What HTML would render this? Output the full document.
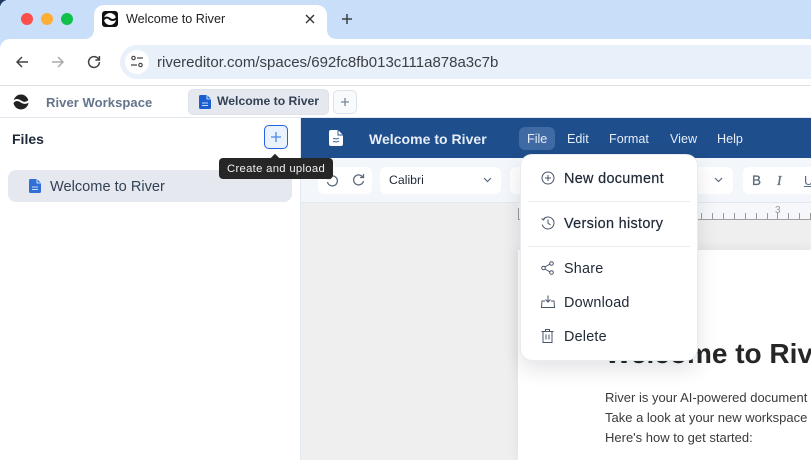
<!DOCTYPE html>
<html><head><meta charset="utf-8"><style>
*{box-sizing:border-box}
html,body{margin:0;padding:0}
body{width:811px;height:460px;overflow:hidden;position:relative;background:#fff;font-family:"Liberation Sans",sans-serif;color:#1f2937}
.a{position:absolute}
.t{position:absolute;white-space:nowrap;line-height:1}
svg{position:absolute;overflow:visible}
</style></head><body>
<div class="a" style="left:0;top:0;width:6px;height:6px;background:#1f3a5f"></div>
<div class="a" style="left:0;top:0;width:811px;height:52px;background:#c9def9;border-radius:8px 0 0 0"></div>
<div class="a" style="left:0;top:39px;width:811px;height:47px;background:#fff;border-radius:10px 0 0 0"></div>
<div class="a" style="left:94px;top:5px;width:233px;height:36px;background:#fff;border-radius:10px 10px 0 0"></div>
<svg style="left:84px;top:29px" width="10" height="10"><path d="M10 0C10 6 7 10 0 10H10z" fill="#fff"/></svg>
<svg style="left:327px;top:29px" width="10" height="10"><path d="M0 0C0 6 3 10 10 10H0z" fill="#fff"/></svg>
<div class="a" style="left:21px;top:13px;width:12px;height:12px;border-radius:50%;background:#fb4f4c"></div>
<div class="a" style="left:41px;top:13px;width:12px;height:12px;border-radius:50%;background:#fdae33"></div>
<div class="a" style="left:61px;top:13px;width:12px;height:12px;border-radius:50%;background:#0fc14b"></div>
<div class="a" style="left:102px;top:11px;width:16px;height:16px;border-radius:3px;background:#111"></div>
<svg style="left:102px;top:11px" width="16" height="16" viewBox="0 0 16 16"><circle cx="8" cy="8" r="6" fill="#fff"/><path d="M1.500 8.500C4 5.500 6.500 6.500 8 8s4.500 1.500 6.500-1" fill="none" stroke="#111" stroke-width="2"/></svg>
<div class="t" style="left:126px;top:12.500px;font-size:12.600px;color:#202124">Welcome to River</div>
<svg style="left:305px;top:14px" width="10" height="10"><path d="M1 1l8 8M9 1L1 9" stroke="#333" stroke-width="1.400"/></svg>
<svg style="left:341px;top:13px" width="12" height="12"><path d="M6 1v10M1 6h10" stroke="#3c4043" stroke-width="1.500"/></svg>
<svg style="left:15px;top:55px" width="14" height="14"><path d="M13 7H2M7 2L2 7l5 5" fill="none" stroke="#444" stroke-width="1.500"/></svg>
<svg style="left:51px;top:55px" width="14" height="14"><path d="M1 7h11M7 2l5 5-5 5" fill="none" stroke="#aaa" stroke-width="1.500"/></svg>
<svg style="left:87px;top:55px" width="14" height="14"><path d="M11.600 4.200A5.400 5.400 0 1 0 12.400 7M12.400 1v4h-4" fill="none" stroke="#444" stroke-width="1.500"/></svg>
<div class="a" style="left:120px;top:45px;width:691px;height:34px;background:#e8f0fa;border-radius:17px 0 0 17px"></div>
<div class="a" style="left:125px;top:50px;width:24px;height:24px;border-radius:50%;background:#fff"></div>
<svg style="left:130px;top:55px" width="14" height="14" fill="none" stroke="#444" stroke-width="1.200"><circle cx="3.500" cy="3" r="1.700"/><path d="M7 3h6M1 10h6"/><circle cx="10.500" cy="10" r="1.700"/></svg>
<div class="t" style="left:157px;top:55px;font-size:15px;color:#3c4043">rivereditor.com/spaces/692fc8fb013c111a878a3c7b</div>
<div class="a" style="left:0;top:85px;width:811px;height:1px;background:#dfdfdf"></div>

<svg style="left:13px;top:94px" width="16" height="16" viewBox="0 0 16 16"><circle cx="8" cy="8" r="7.500" fill="#222"/><path d="M-.5 8.500C3 4.500 6 6 8 7.500s5 2.500 8.500-1" fill="none" stroke="#fff" stroke-width="2"/></svg>
<div class="t" style="left:46px;top:96px;font-size:13px;font-weight:700;color:#64748b;letter-spacing:.07px">River Workspace</div>
<div class="a" style="left:188px;top:89px;width:141px;height:26px;background:#e5e9ef;border:1px solid #dde2e9;border-radius:5px"></div>
<svg style="left:199px;top:95px" width="12" height="14" viewBox="0 0 12 14"><path d="M1.500 0H8l4 4v8.500A1.500 1.500 0 0 1 10.500 14h-9A1.500 1.500 0 0 1 0 12.500v-11A1.500 1.500 0 0 1 1.500 0z" fill="#1a5fd0"/><path d="M3 8h6M3 10.500h6M8 0v4h4" stroke="#fff" fill="none" stroke-width=".8"/></svg>
<div class="t" style="left:217px;top:95px;font-size:12.200px;font-weight:700;color:#334155">Welcome to River</div>
<div class="a" style="left:333px;top:90px;width:24px;height:24px;background:#f8fafc;border:1px solid #dde2e9;border-radius:5px"></div>
<svg style="left:340px;top:97px" width="10" height="10"><path d="M5 1v8M1 5h8" stroke="#7b8794" stroke-width="1.300"/></svg>
<div class="a" style="left:0;top:117px;width:811px;height:1px;background:#e2e8f0"></div>

<div class="a" style="left:300px;top:118px;width:1px;height:342px;background:#e2e8f0"></div>
<div class="t" style="left:12px;top:132px;font-size:14px;font-weight:700;color:#1f2937">Files</div>
<div class="a" style="left:264px;top:125px;width:24px;height:24px;background:#eaf2fe;border:1px solid #2563eb;border-radius:5px"></div>
<svg style="left:271px;top:132px" width="10" height="10"><path d="M5 0v10M0 5h10" stroke="#4a86e8" stroke-width="1.300"/></svg>
<div class="a" style="left:8px;top:170px;width:284px;height:32px;background:#e5e9ef;border-radius:8px"></div>
<svg style="left:29px;top:179px" width="12" height="14" viewBox="0 0 12 14"><path d="M1.500 0H8l4 4v8.500A1.500 1.500 0 0 1 10.500 14h-9A1.500 1.500 0 0 1 0 12.500v-11A1.500 1.500 0 0 1 1.500 0z" fill="#2f6fd6"/><path d="M3 8h6M3 10.500h6M8 0v4h4" stroke="#fff" fill="none" stroke-width=".8"/></svg>
<div class="t" style="left:50px;top:179.500px;font-size:14.600px;color:#334155">Welcome to River</div>

<div class="a" style="left:301px;top:118px;width:510px;height:40px;background:#1f4e8c"></div>
<svg style="left:329px;top:130px" width="14" height="16" viewBox="0 0 14 16"><path d="M2 0h7l5 5v9a2 2 0 0 1-2 2H2a2 2 0 0 1-2-2V2a2 2 0 0 1 2-2z" fill="#fff"/><path d="M4 9c1.500-1 2.500 0 3 0s1.500 0 3-1M4 12c1.500-1 2.500 0 3 0s1.500 0 3-1M9 0v5h5" fill="none" stroke="#1f4e8c" stroke-width=".9"/></svg>
<div class="t" style="left:369px;top:132px;font-size:14px;font-weight:700;color:#e6edf7;letter-spacing:.03px">Welcome to River</div>
<div class="a" style="left:519px;top:127px;width:36px;height:23px;background:#3f6aa3;border-radius:6px"></div>
<div class="t" style="left:527px;top:133px;font-size:12.600px;color:#e6edf7">File</div>
<div class="t" style="left:567px;top:133px;font-size:12.600px;color:#e6edf7">Edit</div>
<div class="t" style="left:609px;top:133px;font-size:12.600px;color:#e6edf7">Format</div>
<div class="t" style="left:670px;top:133px;font-size:12.600px;color:#e6edf7">View</div>
<div class="t" style="left:717px;top:133px;font-size:12.600px;color:#e6edf7">Help</div>

<div class="a" style="left:301px;top:158px;width:510px;height:45px;background:#f3f6fa;border-bottom:1px solid #e2e8f0"></div>
<div class="a" style="left:318px;top:167px;width:54px;height:27px;background:#fff;border-radius:6px"></div>
<svg style="left:326px;top:174px" width="13" height="13" fill="none" stroke="#5c6b7c" stroke-width="1.300"><path d="M2 4.500A5 5 0 1 1 1.500 8M1.500 1v3.500H5"/></svg>
<svg style="left:352px;top:173px" width="13" height="13" fill="none" stroke="#5c6b7c" stroke-width="1.300"><path d="M11 4.500A5 5 0 1 0 11.500 8M11.500 1v3.500H8"/></svg>
<div class="a" style="left:380px;top:167px;width:121px;height:27px;background:#fff;border-radius:6px"></div>
<div class="t" style="left:389px;top:174px;font-size:12.300px;color:#1f2937">Calibri</div>
<svg style="left:483px;top:177px" width="9" height="6"><path d="M1 1l3.500 3.500L8 1" fill="none" stroke="#5c6b7c" stroke-width="1.200"/></svg>
<div class="a" style="left:510px;top:167px;width:223px;height:27px;background:#fff;border-radius:6px"></div>
<svg style="left:714px;top:177px" width="9" height="6"><path d="M1 1l3.500 3.500L8 1" fill="none" stroke="#5c6b7c" stroke-width="1.200"/></svg>
<div class="a" style="left:743px;top:167px;width:68px;height:27px;background:#fff;border-radius:6px 0 0 6px"></div>
<div class="t" style="left:752px;top:174px;font-size:13.500px;color:#5c6b7c;-webkit-text-stroke:.3px #5c6b7c">B</div>
<div class="t" style="left:777px;top:174px;font-family:'Liberation Serif',serif;font-size:13.500px;font-style:italic;color:#5c6b7c;-webkit-text-stroke:.3px #5c6b7c">I</div>
<div class="t" style="left:804px;top:174px;font-size:13px;text-decoration:underline;color:#5c6b7c">U</div>

<div class="a" style="left:301px;top:203px;width:510px;height:257px;background:#efefef"></div>
<div class="a" style="left:518px;top:203px;width:293px;height:16px;background:#f5f7fa"></div>
<div class="a" style="left:518px;top:219px;width:293px;height:1px;background:#a0a0a0"></div>
<div class="a" style="left:518px;top:208px;width:1px;height:11px;background:#999"></div>
<svg style="left:698px;top:213px" width="113" height="6" stroke="#999"><path d="M3.500 0v6M14.500 0v6M25.500 0v6M36.500 0v6M47.500 0v6M58.500 0v6M69.500 0v6M79.500 0v6M90.500 0v6M101.500 0v6M112.500 0v6"/></svg>
<div class="t" style="left:775px;top:206px;font-size:10px;color:#999">3</div>
<div class="a" style="left:518px;top:250px;width:293px;height:210px;background:#fff;box-shadow:0 0 12px rgba(0,0,0,.08)"></div>
<div class="t" style="left:605px;top:340px;font-size:28px;font-weight:700;color:#262626">Welcome to River</div>
<div class="t" style="left:605px;top:391px;font-size:13px;color:#3a3a3a">River is your AI-powered document</div>
<div class="t" style="left:605px;top:411px;font-size:13px;color:#3a3a3a">Take a look at your new workspace</div>
<div class="t" style="left:605px;top:431px;font-size:13px;color:#3a3a3a">Here's how to get started:</div>

<div class="a" style="left:520px;top:154px;width:178px;height:207px;background:#fff;border-radius:12px;border:1px solid #e8ecf1;box-shadow:0 8px 20px rgba(15,23,42,.12)"></div>
<div class="a" style="left:528px;top:201px;width:162px;height:1px;background:#e8ecf1"></div>
<div class="a" style="left:528px;top:246px;width:162px;height:1px;background:#e8ecf1"></div>
<svg style="left:541px;top:171px" width="14" height="14" fill="none" stroke="#475569" stroke-width="1"><circle cx="7" cy="7" r="6"/><path d="M7 4v6M4 7h6"/></svg>
<svg style="left:541px;top:216px" width="14" height="14" fill="none" stroke="#475569" stroke-width="1"><path d="M2.500 3A6 6 0 1 1 1.200 8.500M.5 2.500l2 1.500 1.500-2M7 3.500V7l2.500 2"/></svg>
<svg style="left:541px;top:261px" width="14" height="14" fill="none" stroke="#475569" stroke-width="1"><circle cx="2.500" cy="7" r="1.800"/><circle cx="10.500" cy="2.500" r="1.800"/><circle cx="10.500" cy="11.500" r="1.800"/><path d="M4 6l5-3M4 8l5 3"/></svg>
<svg style="left:541px;top:295px" width="14" height="14" fill="none" stroke="#475569" stroke-width="1"><path d="M7 .5V7M4.500 4.500L7 7l2.500-2.500M4 6H1L.5 12.500h13L13 6h-3"/></svg>
<svg style="left:541px;top:329px" width="14" height="14" fill="none" stroke="#475569" stroke-width="1"><path d="M.5 2.500h12M4.500 2.500V.5h4v2M2 2.500v11h9v-11M5 5.500v5M8 5.500v5"/></svg>
<div class="t" style="left:564px;top:172px;font-size:14.400px;color:#1f2937;letter-spacing:.33px;-webkit-text-stroke:.2px #1f2937">New document</div>
<div class="t" style="left:564px;top:217px;font-size:14.400px;color:#1f2937;letter-spacing:.33px;-webkit-text-stroke:.2px #1f2937">Version history</div>
<div class="t" style="left:564px;top:262px;font-size:14.400px;color:#1f2937;letter-spacing:.2px">Share</div>
<div class="t" style="left:564px;top:296px;font-size:14.400px;color:#1f2937;letter-spacing:.2px">Download</div>
<div class="t" style="left:564px;top:330px;font-size:14.400px;color:#1f2937;letter-spacing:.2px">Delete</div>

<div class="a" style="left:219px;top:158px;width:114px;height:21px;background:#262626;border-radius:4px"></div>
<div class="a" style="left:272px;top:155px;width:6px;height:6px;background:#262626;transform:rotate(45deg)"></div>
<div class="t" style="left:227px;top:164px;font-size:11.300px;color:#f1f1f1;letter-spacing:.3px">Create and upload</div>
</body></html>
